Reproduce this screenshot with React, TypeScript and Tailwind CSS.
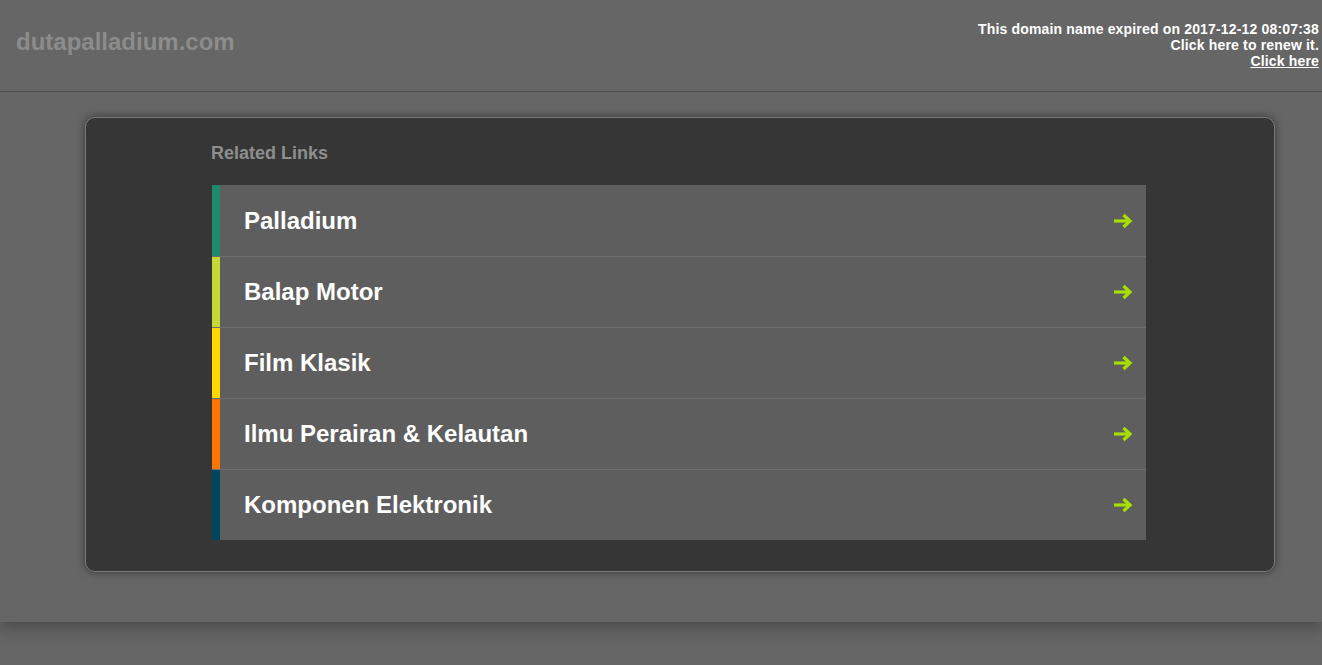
import React from "react";

const links = [
  { label: "Palladium", color: "bg-[#1d8a6b]" },
  { label: "Balap Motor", color: "bg-[#c3d934]" },
  { label: "Film Klasik", color: "bg-[#ffd800]" },
  { label: "Ilmu Perairan & Kelautan", color: "bg-[#ff7600]" },
  { label: "Komponen Elektronik", color: "bg-[#00465e]" },
];

const Arrow: React.FC = () => (
  <svg width="20" height="16" viewBox="0 0 20 16" className="shrink-0">
    <path d="M1 8 H16" stroke="#a6e000" strokeWidth="3.2" />
    <path d="M10.5 2 L17 8 L10.5 14" stroke="#a6e000" strokeWidth="3.2" fill="none" />
  </svg>
);

export default function App() {
  return (
    <div className="min-h-[665px] bg-gradient-to-b from-[#505050] to-[#666666] font-['Liberation_Sans',Arial,sans-serif]">
      <div className="bg-[#666666] shadow-[0_6px_14px_rgba(0,0,0,0.25)]">
        {/* header */}
        <div className="flex h-[92px] items-start justify-between border-b border-[#4f4f4f]">
          <div className="pl-4 pt-[24px] text-[24px] font-bold text-[#8c8c8c]">
            dutapalladium.com
          </div>
          <div className="pr-[3px] pt-[21px] text-right text-[14px] font-bold leading-4 tracking-[0.17px] text-white">
            <div>This domain name expired on 2017-12-12 08:07:38</div>
            <div>Click here to renew it.</div>
            <a href="#" className="underline">Click here</a>
          </div>
        </div>

        {/* content */}
        <div className="px-[85px] pt-[25px] pb-[50px] w-[1360px]">
          <div className="rounded-[10px] border border-[#7a7a7a] bg-[#363636] pl-[125px] pr-[128px] pt-[22px] pb-[31px] shadow-[0_0_8px_rgba(0,0,0,0.5)]">
            <div className="mb-[18px] text-[18px] leading-[27px] font-bold text-[#8e8e8e]">Related Links</div>
            <div className="flex flex-col pl-px">
              {links.map((l, i) => (
                <a
                  key={l.label}
                  href="#"
                  className={`flex h-[71px] items-stretch bg-[#5e5e5e] ${i > 0 ? "border-t border-[#6e6e6e]" : ""}`}
                >
                  <div className={`w-2 ${l.color}`} />
                  <div className="flex flex-1 items-center justify-between pl-6 pr-[13px]">
                    <span className="text-[24px] font-bold text-white">{l.label}</span>
                    <Arrow />
                  </div>
                </a>
              ))}
            </div>
          </div>
        </div>
      </div>
    </div>
  );
}
